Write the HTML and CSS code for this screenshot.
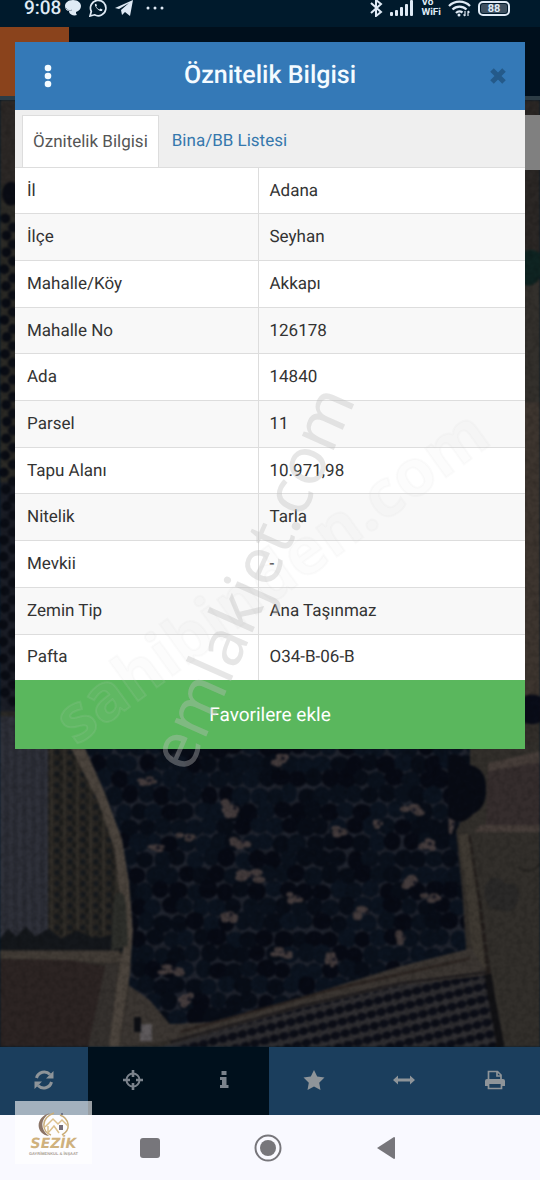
FILE: index.html
```html
<!DOCTYPE html>
<html lang="tr">
<head>
<meta charset="utf-8">
<meta name="viewport" content="width=device-width, initial-scale=1">
<title>Öznitelik Bilgisi</title>
<link rel="stylesheet" href="styles.css">
</head>
<body>
<div class="screen">
  <header class="status">
    <div class="status-group">
      <span class="clock">9:08</span>
      <svg width="16" height="16" viewBox="0 0 16 16" fill="#dfeaf5"><path d="M8 0C3 0 0 3 0 6c0 3 2 5 4 5v1c1 3 5 4 8 3-1-1-1-2-1-3 3-1 5-3 5-6 0-3-3-6-8-6z"/><path d="M1 8c2 3 4 3 6 2" fill="none" stroke="#7f8f9e"/></svg>
      <svg width="18" height="18" viewBox="0 0 18 18" fill="none" stroke="#dfeaf5" stroke-width="1.7"><path d="M1 17l1.3-4.500A7.700 7.700 0 1 1 5.500 15.800z"/><path d="M6 5c-1 2 4 8 7 7l.5-1.500-2-1-1 1C9 10 7.500 8.500 7.200 7.500L8 6.500 7.200 4.800z" fill="#dfeaf5" stroke="none"/></svg>
      <svg width="18" height="16" viewBox="0 0 18 16" fill="#dfeaf5"><path d="M0 8L18 0l-3 16-5-4-3 3-1-5 8-7-10 6z"/></svg>
      <svg class="more" width="18" height="4" viewBox="0 0 18 4" fill="#dfeaf5"><circle cx="2" cy="2" r="1.500"/><circle cx="9" cy="2" r="1.500"/><circle cx="16" cy="2" r="1.500"/></svg>
    </div>
    <div class="status-group status-right">
      <svg width="13" height="18" viewBox="0 0 13 18" fill="none" stroke="#dfeaf5" stroke-width="2"><path d="M1 4l10 9-5 4V1l5 4L1 14"/></svg>
      <svg width="24" height="16" viewBox="0 0 24 16" fill="#dfeaf5"><rect y="12" width="3" height="4" rx="1"/><rect x="5" y="10" width="3" height="6" rx="1"/><rect x="10" y="7" width="3" height="9" rx="1"/><rect x="15" y="4" width="3" height="12" rx="1"/><rect x="20" width="3" height="16" rx="1"/></svg>
      <span class="vowifi"><span>Vo</span><span>WiFi</span></span>
      <svg width="23" height="17" viewBox="0 0 23 17" fill="none" stroke="#dfeaf5" stroke-width="2.300"><path d="M1 6a15 15 0 0 1 21 0M4.500 9.500a10 10 0 0 1 14 0M8 13a5 5 0 0 1 6.500-.5"/><circle cx="11" cy="15" r="1.500" fill="#dfeaf5" stroke="none"/><path d="M17 11v5M15.500 14.500L17 16M20 16v-5M20 11l1.500 1.500" stroke-width="1.200"/></svg>
      <span class="battery"><span>88</span></span>
    </div>
  </header>
  <div class="app-bar"><div class="app-logo"></div></div>
  <main class="map">
    <svg class="map-art" viewBox="0 96 540 951" preserveAspectRatio="none" aria-hidden="true">
      <defs>
        <filter id="soft" x="-5%" y="-5%" width="110%" height="110%" color-interpolation-filters="sRGB"><feGaussianBlur stdDeviation="1.1"/></filter>
        <filter id="grain" x="0" y="0" width="100%" height="100%"><feTurbulence type="fractalNoise" baseFrequency=".18" numOctaves="2" seed="4"/><feColorMatrix values="0 0 0 0 0  0 0 0 0 0  0 0 0 0 0  1.600 0 0 0 -.6"/></filter>
        <pattern id="furrow" width="9" height="40" patternUnits="userSpaceOnUse"><rect width="9" height="40" fill="#2a2c34"/><rect width="4" height="40" fill="#30323b"/></pattern>
        <pattern id="rows" width="13" height="11" patternUnits="userSpaceOnUse"><rect width="13" height="11" fill="#2a2723"/><ellipse cx="5" cy="3" rx="3" ry="3" fill="#171a1d"/><ellipse cx="9" cy="8" rx="2" ry="3" fill="#1b1c1b"/><rect x="12" width="1" height="11" fill="#3a3730"/></pattern>
        <pattern id="hedge" width="10" height="12" patternUnits="userSpaceOnUse" patternTransform="rotate(-14)"><rect width="10" height="12" fill="#2f2e31"/><ellipse cx="5" cy="6" rx="5" ry="4" fill="#0c0e17"/></pattern>
        <clipPath id="orchard"><path d="M82 740L105 792 122 838 129 880 133 930 129 985 150 1000 170 1024 210 1022 300 997 400 966 466 949 462 890 456 830 470 800 470 740z"/></clipPath>
      </defs>
      <g filter="url(#soft)">
        <rect y="96" width="540" height="951" fill="#322e2a"/>
        <rect y="96" width="20" height="95" fill="#2c2826"/>
        <rect y="180" width="20" height="570" fill="#2b2a26"/>
        <rect y="480" width="20" height="230" fill="#1a1d26"/>
        <g id="edge-trees"></g>
        <rect x="520" y="96" width="20" height="160" fill="#2b2725"/>
        <rect x="520" y="280" width="20" height="120" fill="#33302c"/>
        <rect x="520" y="400" width="20" height="300" fill="#3d352f"/>
        <path d="M520 250q12-8 22 2v20q-12 18-22 5z" fill="#0f2422"/>
        <rect y="715" width="50" height="240" fill="url(#furrow)"/>
        <path d="M48 740H75L95 790 112 840 118 885 128 955H48z" fill="url(#rows)"/>
        <path d="M0 938l8-10 8 8 10-10 9 10 14-8 12 10 16-8 18 8 18-4 6 18H0z" fill="#14171b"/>
        <path d="M0 950H118L125 960 108 963 70 960 0 958z" fill="#423c36"/>
        <path d="M0 959L70 960 106 966 98 1047H0z" fill="#2c2423"/>
        <path d="M106 962L118 965 110 1047H88z" fill="#35312e"/>
        <path d="M70 745H84L105 785 122 835 129 880 134 940 130 970 119 1047H109L118 975 125 940 115 850 98 800z" fill="#4b443d"/>
        <path d="M114 895q10-10 12 10l2 40-17 5z" fill="#2d2e2a"/>
        <path d="M130 985L150 1000 172 1024 470 947 490 960 470 1000 120 1047z" fill="#3b3632"/>
        <path d="M180 1032L320 992 470 958" stroke="#2b2421" stroke-width="3" fill="none"/>
        <path d="M160 1047L300 1008 400 985 487 975 497 1047z" fill="url(#hedge)"/>
        <path d="M170 1042L300 1006 400 983 487 972" stroke="#1b191c" stroke-width="2" fill="none"/>
        <path d="M455 740H540V1047H502L488 970 474 900 468 840 455 830z" fill="#322f2b"/>
        <path d="M488 762L540 756V824L486 824z" fill="#352d2d"/>
        <path d="M488 762L540 750V761L488 770zM480 824H540V831H475z" fill="#463d39"/>
        <path d="M468 835L480 910 488 970 499 1047" stroke="#221d1b" stroke-width="5" stroke-dasharray="9 2" fill="none"/>
        <path d="M458 835L465 880 472 950 486 970 478 900 468 832z" fill="#3e3932"/>
        <path d="M485 885q10-16 20-2 14-2 14 12-4 22-20 14-16 2-14-24z" fill="#2a2928"/>
        <path d="M518 866q15 10 22-4" stroke="#262421" stroke-width="2" fill="none"/>
        <path d="M488 974L492 1000 501 1047" stroke="#111114" stroke-width="7" fill="none"/>
        <g clip-path="url(#orchard)"><rect x="70" y="735" width="410" height="300" fill="#20242e"/><g id="trees"></g></g>
        <g id="clearings" fill="#433b3c"></g>
        <path d="M448 755q12-7 19 8 20 3 19 25 1 18-13 25-12 14-25 3z" fill="#080b14"/>
        <circle cx="532" cy="708" r="15" fill="#090c18"/>
        <rect x="140" y="1024" width="12" height="17" fill="#5d595b"/><rect x="134" y="1017" width="7" height="15" fill="#0d0f14"/>
      </g>
      <rect y="96" width="540" height="951" filter="url(#grain)" opacity=".2"/>
    </svg>
    <div class="side-tab"></div>
  </main>
  <nav class="toolbar" aria-label="Harita araçları">
    <button class="tool" aria-label="Yenile"><svg width="20" height="20" viewBox="0 0 20 20"><path d="M2.500 8A8 8 0 0 1 16 4.500M17.500 12A8 8 0 0 1 4 15.500" fill="none" stroke="currentColor" stroke-width="3"/><path d="M19.500 1v7.500H12zM.5 19v-7.500H8z"/></svg></button>
    <button class="tool tool-dark" aria-label="Konum"><svg width="20" height="20" viewBox="0 0 20 20"><circle cx="10" cy="10" r="6.500" fill="none" stroke="currentColor" stroke-width="2"/><path d="M8.700 0h2.600v7H8.700zM8.700 13h2.600v7H8.700zM0 8.700h7v2.600H0zM13 8.700h7v2.600h-7z"/></svg></button>
    <button class="tool tool-dark" aria-label="Bilgi"><svg width="20" height="20" viewBox="0 0 20 20"><path d="M7.500 1h5v4h-5zM6 7h6.500v8h2v3H6v-3h2v-5H6z"/></svg></button>
    <button class="tool" aria-label="Favoriler"><svg width="22" height="20" viewBox="0 0 22 20"><path d="M11 0l3.200 6.600 7.300 1-5.300 5.100 1.300 7.300-6.500-3.500L4.500 20l1.300-7.300L.5 7.600l7.300-1z"/></svg></button>
    <button class="tool" aria-label="Ölçüm"><svg width="22" height="20" viewBox="0 0 22 20"><path d="M0 10l5-4.500v3h12v-3l5 4.500-5 4.500v-3H5v3z"/></svg></button>
    <button class="tool" aria-label="Yazdır"><svg width="22" height="20" viewBox="0 0 22 20"><path d="M4.500 10V1.500h9L17 5v5M13 1.500V6h4" fill="none" stroke="currentColor" stroke-width="1.700"/><path d="M3 9h16q2 0 2 2v5h-3v-2H4v2H1v-5q0-2 2-2z"/><path d="M4.500 14v4.500h13V14" fill="none" stroke="currentColor" stroke-width="1.700"/></svg></button>
  </nav>
  <footer class="system-nav">
    <button aria-label="Son uygulamalar"><svg width="20" height="20" viewBox="0 0 20 20"><rect width="20" height="20" rx="3"/></svg></button>
    <button aria-label="Ana ekran"><svg width="28" height="28" viewBox="0 0 28 28"><circle cx="14" cy="14" r="12.500" fill="none" stroke="currentColor" stroke-width="2"/><circle cx="14" cy="14" r="8"/></svg></button>
    <button aria-label="Geri"><svg width="20" height="24" viewBox="0 0 20 24"><path d="M1 12L18 1q1 0 1 1v20q0 1-1 1z"/></svg></button>
  </footer>

  <section class="dialog" role="dialog" aria-labelledby="dialog-title">
    <header class="dialog-head">
      <button class="icon-button" aria-label="Menü"><svg width="8" height="24" viewBox="0 0 8 24" fill="#f4fbff"><circle cx="4" cy="4" r="3.300"/><circle cx="4" cy="12" r="3.300"/><circle cx="4" cy="20" r="3.300"/></svg></button>
      <h1 id="dialog-title">Öznitelik Bilgisi</h1>
      <button class="icon-button close" aria-label="Kapat"><svg width="18" height="18" viewBox="0 0 18 18"><path d="M3 3l12 12M15 3L3 15" stroke="#245a8a" stroke-width="5"/></svg></button>
    </header>
    <div class="tabs" role="tablist">
      <button class="tab tab-active" role="tab" aria-selected="true">Öznitelik Bilgisi</button>
      <button class="tab" role="tab" aria-selected="false">Bina/BB Listesi</button>
    </div>
    <table class="attributes">
      <tbody>
        <tr><th scope="row">İl</th><td>Adana</td></tr>
        <tr><th scope="row">İlçe</th><td>Seyhan</td></tr>
        <tr><th scope="row">Mahalle/Köy</th><td>Akkapı</td></tr>
        <tr><th scope="row">Mahalle No</th><td>126178</td></tr>
        <tr><th scope="row">Ada</th><td>14840</td></tr>
        <tr><th scope="row">Parsel</th><td>11</td></tr>
        <tr><th scope="row">Tapu Alanı</th><td>10.971,98</td></tr>
        <tr><th scope="row">Nitelik</th><td>Tarla</td></tr>
        <tr><th scope="row">Mevkii</th><td>-</td></tr>
        <tr><th scope="row">Zemin Tip</th><td>Ana Taşınmaz</td></tr>
        <tr><th scope="row">Pafta</th><td>O34-B-06-B</td></tr>
      </tbody>
    </table>
    <button class="favorite">Favorilere ekle</button>
  </section>

  <svg class="watermark" viewBox="0 0 540 1180" aria-hidden="true">
    <text class="mark-wide" transform="translate(76 746) rotate(-36)">sahibinden.com</text>
    <text class="mark-tall" transform="translate(189 775) rotate(-66)">emlakjet.com</text>
  </svg>
  <div class="agency">
    <svg width="36" height="25" viewBox="0 0 36 25" fill="none" aria-hidden="true"><path d="M14 1C-1 5-1 22 13 24 4 18 4 7 14 1z" fill="#8b7466"/><path d="M18 1C4 6 6 20 15 23M24 3c10 4 11 15 2 20" stroke="#c9ad79" stroke-width="1.500"/><path d="M9 15l8-8 5 5 4-4 6 6M12 14v7l6-7 5 7" stroke="#dcc18d" stroke-width="1.500"/><path d="M23 13h4v5h-4z" fill="#746d78"/><circle cx="26" cy="2" r="1" fill="#626275"/></svg>
    <span class="agency-name">SEZİK</span>
    <span class="agency-sub">GAYRİMENKUL &amp; İNŞAAT</span>
  </div>
</div>
<script src="map.js"></script>
</body>
</html>
```
FILE: styles.css
```css
* { box-sizing: border-box; }
body { margin: 0; font-family: Roboto, "Noto Sans", sans-serif; color: #333; text-rendering: geometricPrecision; }
button { border: 0; padding: 0; background: none; color: inherit; font: inherit; text-rendering: inherit; cursor: pointer; }
svg { display: block; flex: none; }
h1 { margin: 0; }

.screen { position: relative; display: flex; flex-direction: column; min-height: 100vh; overflow: hidden; background: #001a2c; }

.status { display: flex; justify-content: space-between; height: 27px; padding: 0 30px 11px 24px; background: #001a2c; color: #dfeaf5; }
.status-group { display: flex; align-items: center; gap: 8px; }
.status-right { gap: 7px; }
.clock { font-size: 19px; font-weight: 500; line-height: 16px; margin-right: -4px; }
.more { margin-left: 5px; }
.vowifi { display: flex; flex-direction: column; font-size: 10px; line-height: 10px; font-weight: 700; }
.battery { display: flex; width: 32px; height: 15px; padding: 1px; border: 2px solid #dfeaf5; border-radius: 5px; }
.battery span { flex: 1; background: #3e5060; border-radius: 2px; font-size: 11px; font-weight: 700; line-height: 10px; text-align: center; }

.app-bar { height: 69px; background: #000f1c; }
.app-logo { width: 69px; height: 100%; background: #8a431c; }

.map { position: relative; flex: 1; min-height: 0; border-top: 4px solid #2c3c45; }
.map-art { position: absolute; inset: 0; width: 100%; height: 100%; }
.side-tab { position: absolute; top: 15px; right: 0; width: 28px; height: 55px; background: #808080; }

.toolbar { display: grid; grid-template-columns: 88px repeat(5, 1fr); height: 68px; background: #1b3e5d; }
.tool { display: flex; align-items: center; justify-content: center; padding-bottom: 2px; color: #8e9499; }
.tool svg { fill: currentColor; }
.tool-dark { background: #00101c; color: #7b838c; }

.system-nav { display: flex; justify-content: center; align-items: center; gap: 94px; height: 65px; padding-right: 4px; background: #f9f9ff; color: #77767b; }
.system-nav svg { fill: currentColor; }

.dialog { position: absolute; top: 42px; left: 15px; right: 15px; display: flex; flex-direction: column; background: #fff; }
.dialog-head { display: flex; align-items: center; justify-content: space-between; height: 68px; padding: 0 18px; background: #3479b7; }
.dialog-head h1 { color: #f4fbff; font-size: 25px; font-weight: 500; line-height: 32px; }
.icon-button { display: flex; align-items: center; justify-content: center; width: 30px; height: 40px; }
.close { justify-content: flex-end; }

.tabs { display: flex; height: 58px; padding: 5px 7px 0; background: #efefef; border-bottom: 1px solid #ddd; }
.tab { padding: 0 13px; font-size: 17px; line-height: 50px; color: #3678ad; }
.tab-active { padding: 0 10px; background: #fff; border: 1px solid #ddd; border-bottom: 0; color: #555; }

.attributes { width: 100%; height: 512px; table-layout: fixed; border-collapse: collapse; font-size: 17px; line-height: 24px; }
.attributes th, .attributes td { padding: 0 11px; text-align: left; font-weight: 400; border-bottom: 1px solid #ddd; }
.attributes th { width: 243px; padding-left: 12px; border-right: 1px solid #ddd; }
.attributes tr:nth-child(even) { background: #f8f8f8; }
.attributes tr:last-child > * { border-bottom: 0; }
.favorite { height: 69px; background: #5ab75d; color: #fff; font-size: 19px; line-height: 24px; }

.watermark { position: absolute; inset: 0; width: 100%; height: 100%; pointer-events: none; }
.mark-wide { font: 700 65px "Open Sans", sans-serif; fill: #d4d4d4; fill-opacity: .06; stroke: #d4d4d4; stroke-opacity: .1; stroke-width: 2; }
.mark-tall { font: 400 65px "Noto Sans", sans-serif; fill: #bdbdbd; fill-opacity: .38; }

.agency { position: absolute; left: 15px; bottom: 16px; display: flex; flex-direction: column; align-items: center; width: 77px; height: 63px; padding-top: 11px; background: rgba(255, 255, 255, .6); }
.agency-name { color: #cfb17d; font: italic 700 14px/14px "DejaVu Sans", sans-serif; }
.agency-sub { color: #a89c93; font: 700 4px/5px "Liberation Sans", sans-serif; }
```
FILE: map.js
```js
const NS = "http://www.w3.org/2000/svg";
let seed = 11;
function random() {
  seed = (seed * 16807) % 2147483647;
  return seed / 2147483647;
}
function ellipse(parent, cx, cy, rx, ry, fill) {
  const node = document.createElementNS(NS, "ellipse");
  const values = { cx, cy, rx, ry };
  for (const key in values) node.setAttribute(key, values[key]);
  if (fill) node.setAttribute("fill", fill);
  parent.appendChild(node);
}

const shades = ["#080d17", "#0a111c", "#0b131f", "#070a14"];
const trees = document.getElementById("trees");
for (let row = 0; row < 19; row++) {
  for (let col = 0; col < 27; col++) {
    const x = 72 + col * 16 + (row % 2) * 8 + random() * 4;
    const y = 744 + row * 16 + random() * 4;
    ellipse(trees, x, y, 8 + random() * 2, 8 + random() * 2, shades[Math.floor(random() * 4)]);
  }
}

const clearings = [
  [232, 808, 9, 8], [240, 842, 9, 6], [249, 876, 13, 7], [228, 915, 8, 6], [186, 837, 8, 5],
  [155, 848, 8, 4], [280, 758, 8, 6], [337, 831, 9, 5], [411, 810, 11, 6], [376, 823, 6, 4],
  [427, 844, 7, 6], [412, 883, 9, 7], [431, 897, 9, 5], [364, 913, 9, 6], [401, 937, 7, 6],
  [295, 897, 7, 5], [283, 953, 10, 5], [171, 970, 11, 5], [186, 1000, 7, 6], [331, 960, 5, 8],
  [147, 780, 8, 4], [451, 824, 4, 8]
];
const bare = document.getElementById("clearings");
for (const [x, y, rx, ry] of clearings) {
  for (let i = 0; i < 6; i++) {
    ellipse(bare, x + (random() - .5) * rx * 1.6, y + (random() - .5) * ry * 1.6, rx * .5, ry * .5);
  }
  ellipse(bare, x + 3, y - 1, 2, 2, "#1a1a24");
}

const edge = document.getElementById("edge-trees");
ellipse(edge, 11, 190, 9, 12, "#0a0c14");
for (let y = 215; y < 700; y += 17) {
  ellipse(edge, 3 + random() * 4, y, 5, 5, "#090c14");
  ellipse(edge, 13, y + 9, 5, 5, "#0b0e16");
}
```
